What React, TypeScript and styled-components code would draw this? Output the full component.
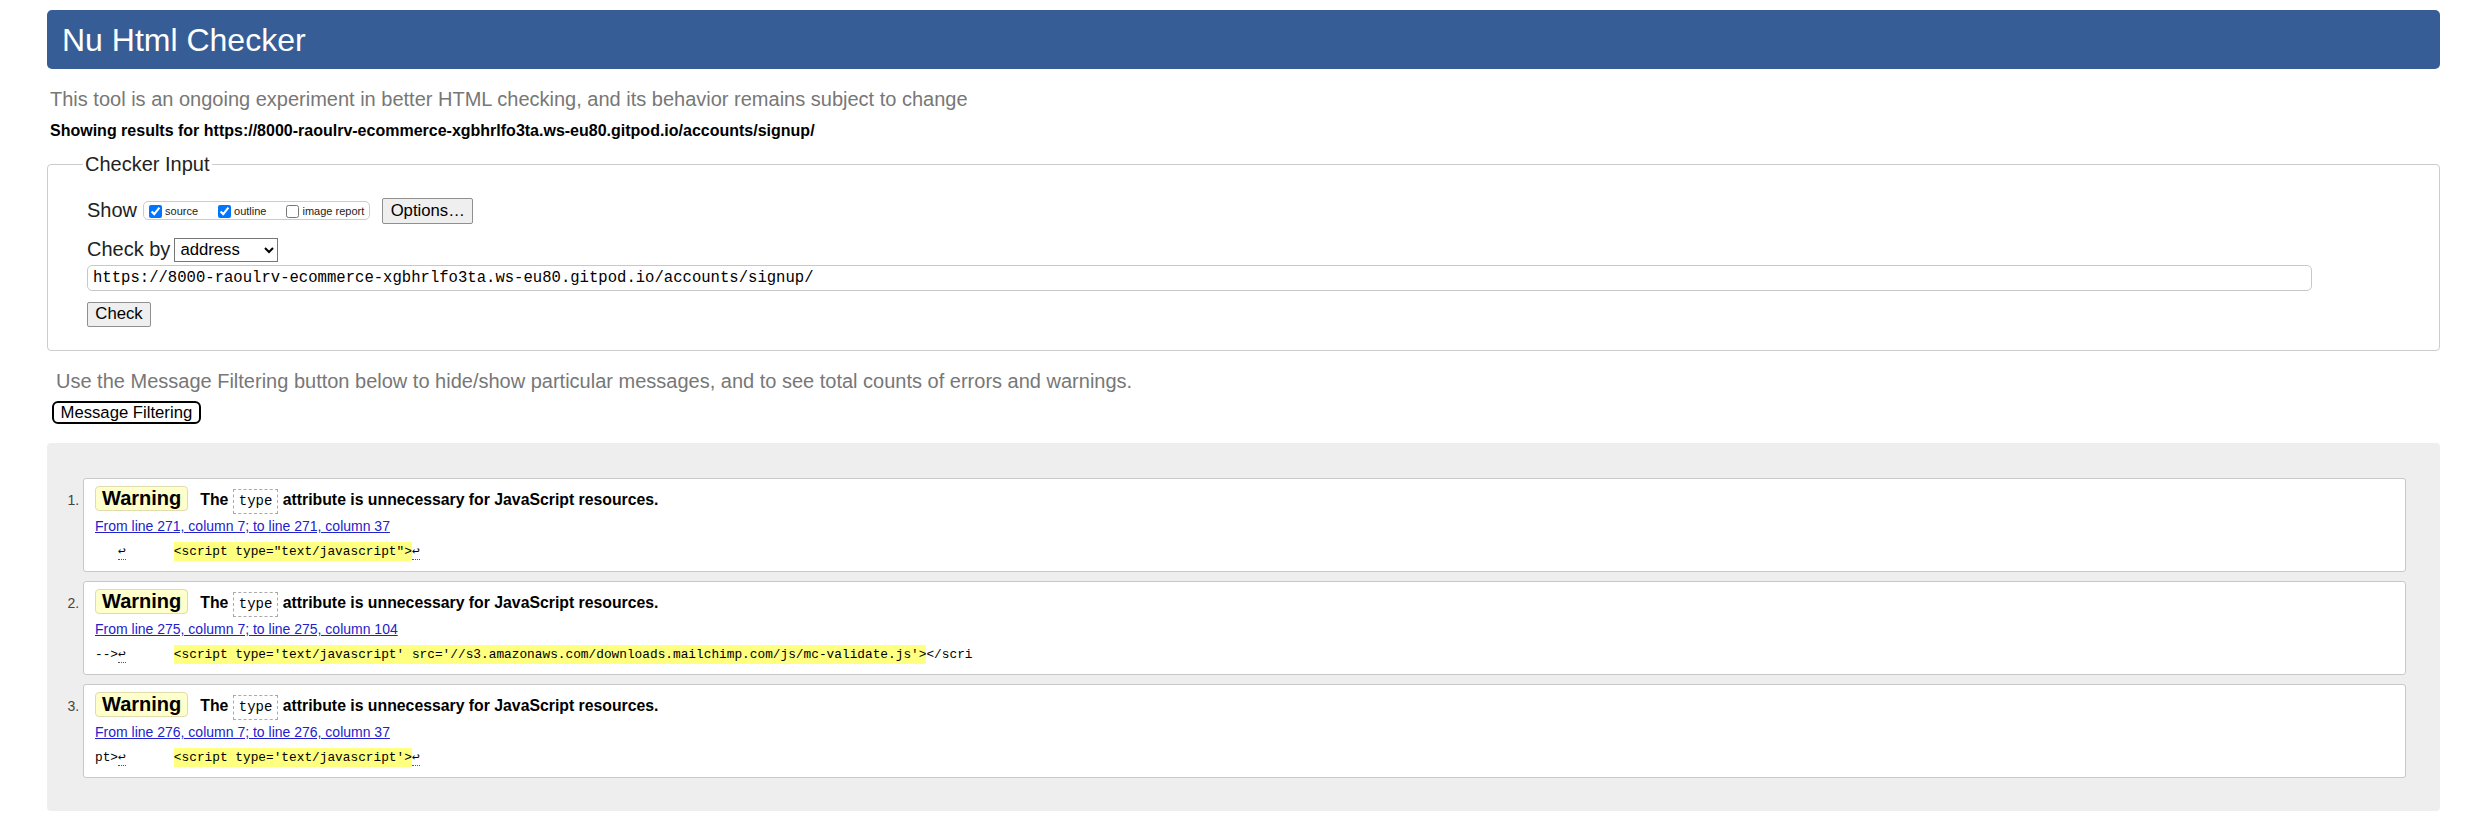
import React from "react";
import styled, { createGlobalStyle } from "styled-components";

const GlobalStyle = createGlobalStyle`
  html, body {
    margin: 0;
    padding: 0;
    background: #ffffff;
  }
  body {
    font-family: "Liberation Sans", Arial, sans-serif;
    color: #000;
  }
  * { box-sizing: border-box; }
`;

const Page = styled.div`
  margin: 0 42px 0 47px;
  padding: 10px 0 15px;
`;

const Header = styled.h1`
  margin: 0;
  height: 59px;
  padding: 2px 0 0 15px;
  line-height: 57px;
  background: #365d95;
  color: #ffffff;
  border-radius: 5px;
  font-size: 32px;
  font-weight: normal;
`;

const Intro = styled.p<{ $top: number; $left?: number }>`
  margin: ${(p) => p.$top}px 0 0 ${(p) => p.$left ?? 3}px;
  font-size: 20px;
  line-height: 23px;
  color: #777777;
`;

const Showing = styled.p`
  margin: 11px 0 0 3px;
  font-size: 16px;
  line-height: 18px;
  font-weight: bold;
`;

const InputFieldset = styled.fieldset`
  margin: 12.5px 0 0;
  padding: 22px 0 23px 39px;
  border: 1px solid #cccccc;
  border-radius: 4px;
  min-width: 0;
`;

const Legend = styled.legend`
  margin-left: -4px;
  padding: 0 2px;
  font-size: 20px;
  line-height: 23px;
  color: #222;
`;

const FormRow = styled.div<{ $top?: number; $h: number }>`
  display: flex;
  align-items: center;
  height: ${(p) => p.$h}px;
  margin-top: ${(p) => p.$top ?? 0}px;
`;

const FieldLabel = styled.span`
  font-size: 20px;
  line-height: 23px;
  color: #222;
`;

const OptionGroup = styled.span`
  display: inline-flex;
  align-items: center;
  gap: 20px;
  height: 19px;
  margin: 0 12px 0 6px;
  padding: 0 5px;
  border: 1px solid #cccccc;
  border-radius: 5px;
`;

const OptionItem = styled.label`
  display: inline-flex;
  align-items: center;
  gap: 3px;
  font-size: 11px;
  color: #222;
  padding-top: 1px;
`;

const Checkbox = styled.input`
  margin: 0;
  width: 13px;
  height: 13px;
`;

const PlainButton = styled.button<{ $w: number; $h: number }>`
  width: ${(p) => p.$w}px;
  height: ${(p) => p.$h}px;
  padding: 0;
  font-family: "Liberation Sans", Arial, sans-serif;
  font-size: 16.7px;
  color: #000;
  background: #efefef;
  border: 1px solid #8f8f8f;
  border-radius: 2px;
`;

const Select = styled.select`
  width: 104px;
  height: 24px;
  margin-left: 4px;
  padding: 0 1px;
  font-family: "Liberation Sans", Arial, sans-serif;
  font-size: 16.7px;
  color: #000;
  background: #fff;
  border: 1px solid #767676;
  border-radius: 0;
`;

const UrlInput = styled.input`
  display: block;
  width: 2225px;
  height: 26px;
  margin-top: 3px;
  padding: 0 5px;
  font-family: "Liberation Mono", "DejaVu Sans Mono", monospace;
  font-size: 15.6px;
  color: #000;
  border: 1px solid #c8c8c8;
  border-radius: 5px;
`;

const CheckRow = styled.div`
  margin-top: 11px;
`;

const FilterButton = styled.button`
  display: block;
  height: 23px;
  margin: 8px 0 0 5px;
  padding: 0 6.5px;
  font-family: "Liberation Sans", Arial, sans-serif;
  font-size: 16.7px;
  line-height: 19px;
  color: #000;
  background: #ffffff;
  border: 2px solid #000;
  border-radius: 6px;
`;

const Results = styled.div`
  margin-top: 19px;
  padding: 35px 34px 33px 36px;
  background: #eeeeee;
  border-radius: 4px;
`;

const MessageList = styled.ol`
  margin: 0;
  padding: 0;
  list-style: decimal outside;
`;

const Message = styled.li`
  margin: 0 0 9px;
  padding: 7px 10px 10px 11px;
  background: #ffffff;
  border: 1px solid #c8c8c8;
  border-radius: 3px;
  font-size: 15px;
  &:last-child { margin-bottom: 0; }
  &::marker {
    color: #444;
    font-size: 14px;
  }
`;

const MessageHead = styled.div`
  height: 27px;
  font-size: 15.8px;
  line-height: 17px;
  font-weight: bold;
  white-space: nowrap;
`;

const Badge = styled.strong`
  display: inline-block;
  height: 25px;
  padding: 0 6px;
  margin-right: 12px;
  font-size: 20px;
  line-height: 23px;
  background: #ffffcc;
  border: 1px solid #e0dcae;
  border-radius: 4px;
`;

const Code = styled.code`
  display: inline-block;
  height: 25px;
  padding: 0 5px;
  font-family: "Liberation Mono", "DejaVu Sans Mono", monospace;
  font-size: 14px;
  font-weight: normal;
  line-height: 23px;
  border: 1px dashed #aaaaaa;
`;

const Location = styled.a`
  display: block;
  margin-top: 5px;
  font-size: 14px;
  line-height: 16px;
  color: #2222cc;
  text-decoration: underline;
`;

const Extract = styled.code`
  display: block;
  margin-top: 9px;
  height: 18px;
  font-family: "Liberation Mono", "DejaVu Sans Mono", monospace;
  font-size: 12.8px;
  line-height: 18px;
  white-space: pre;
  color: #000;
`;

const LineFeed = styled.span`
  display: inline-block;
  line-height: 14px;
  border-bottom: 1px dotted #555;
  margin-right: 2px;
`;

const Mark = styled.mark`
  background: #ffff80;
  color: #000;
  padding: 2px 0;
`;

type Item = {
  loc: string;
  before: string;
  mark: string;
  after: string;
  afterLf: boolean;
};

const items: Item[] = [
  {
    loc: "From line 271, column 7; to line 271, column 37",
    before: "   ",
    mark: '<script type="text/javascript">',
    after: "",
    afterLf: true,
  },
  {
    loc: "From line 275, column 7; to line 275, column 104",
    before: "-->",
    mark: "<script type='text/javascript' src='//s3.amazonaws.com/downloads.mailchimp.com/js/mc-validate.js'>",
    after: "</scri",
    afterLf: false,
  },
  {
    loc: "From line 276, column 7; to line 276, column 37",
    before: "pt>",
    mark: "<script type='text/javascript'>",
    after: "",
    afterLf: true,
  },
];

const URL = "https://8000-raoulrv-ecommerce-xgbhrlfo3ta.ws-eu80.gitpod.io/accounts/signup/";

export default function App() {
  return (
    <>
      <GlobalStyle />
      <Page>
        <Header>Nu Html Checker</Header>
        <Intro $top={19}>
          This tool is an ongoing experiment in better HTML checking, and its behavior remains subject to change
        </Intro>
        <Showing>Showing results for {URL}</Showing>

        <InputFieldset>
          <Legend>Checker Input</Legend>
          <FormRow $h={26}>
            <FieldLabel>Show</FieldLabel>
            <OptionGroup>
              <OptionItem>
                <Checkbox type="checkbox" defaultChecked />
                source
              </OptionItem>
              <OptionItem>
                <Checkbox type="checkbox" defaultChecked />
                outline
              </OptionItem>
              <OptionItem>
                <Checkbox type="checkbox" />
                image report
              </OptionItem>
            </OptionGroup>
            <PlainButton type="button" $w={91} $h={26}>
              Options…
            </PlainButton>
          </FormRow>
          <FormRow $top={14} $h={24}>
            <FieldLabel>Check by</FieldLabel>
            <Select defaultValue="address">
              <option value="address">address</option>
              <option value="file">file upload</option>
              <option value="text">text input</option>
            </Select>
          </FormRow>
          <UrlInput type="url" defaultValue={URL} />
          <CheckRow>
            <PlainButton type="button" $w={64} $h={25}>
              Check
            </PlainButton>
          </CheckRow>
        </InputFieldset>

        <Intro $top={19.5} $left={9}>
          Use the Message Filtering button below to hide/show particular messages, and to see total counts of errors and warnings.
        </Intro>
        <FilterButton type="button">Message Filtering</FilterButton>

        <Results>
          <MessageList>
            {items.map((it, i) => (
              <Message key={i}>
                <MessageHead>
                  <Badge>Warning</Badge>
                  The <Code>type</Code> attribute is unnecessary for JavaScript resources.
                </MessageHead>
                <Location href="#">{it.loc}</Location>
                <Extract>
                  {it.before}
                  <LineFeed>↩</LineFeed>
                  {"      "}
                  <Mark>{it.mark}</Mark>
                  {it.afterLf ? <LineFeed>↩</LineFeed> : it.after}
                </Extract>
              </Message>
            ))}
          </MessageList>
        </Results>
      </Page>
    </>
  );
}
